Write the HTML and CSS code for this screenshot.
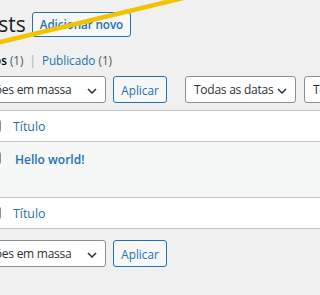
FILE: index.html
```html
<html>
<head>
  <title>Posts</title>
  <link rel="stylesheet" href="styles.css">
</head>
<body>
  <div class="wrap">
    <div class="heading">
      <h1>Posts</h1>
      <a class="title-action" href="#">Adicionar novo</a>
    </div>

    <ul class="subsubsub">
      <li><a class="current" href="#">Todos <span class="count">(1)</span></a><span class="sep">|</span></li>
      <li><a href="#">Publicado <span class="count">(1)</span></a></li>
    </ul>

    <div class="tablenav">
      <div class="select bulk">Ações em massa
        <svg class="chev" viewBox="0 0 10 6"><polyline points="1,1 5,5 9,1"/></svg>
      </div>
      <button class="button">Aplicar</button>
      <div class="select dates">Todas as datas
        <svg class="chev" viewBox="0 0 10 6"><polyline points="1,1 5,5 9,1"/></svg>
      </div>
      <div class="select cats">Todas as categorias
        <svg class="chev" viewBox="0 0 10 6"><polyline points="1,1 5,5 9,1"/></svg>
      </div>
    </div>

    <table class="posts">
      <thead>
        <tr>
          <td class="check"><span class="cb"></span></td>
          <th class="title"><a href="#">Título</a></th>
        </tr>
      </thead>
      <tbody>
        <tr class="alt">
          <td class="check"><span class="cb"></span></td>
          <td class="title"><a class="row-title" href="#">Hello world!</a></td>
        </tr>
      </tbody>
      <tfoot>
        <tr>
          <td class="check"><span class="cb"></span></td>
          <th class="title"><a href="#">Título</a></th>
        </tr>
      </tfoot>
    </table>

    <div class="tablenav bottom">
      <div class="select bulk">Ações em massa
        <svg class="chev" viewBox="0 0 10 6"><polyline points="1,1 5,5 9,1"/></svg>
      </div>
      <button class="button">Aplicar</button>
    </div>
  </div>

  <svg class="marker" viewBox="0 0 320 60"><line x1="-10" y1="44.5" x2="200" y2="-6" /></svg>
</body>
</html>
```

FILE: styles.css
```css
html, body {
  overflow: hidden;
}

body {
  margin: 0;
  background-color: #f0f0f1;
  font-family: "Open Sans", "Noto Sans", sans-serif;
  color: #1d2327;
  font-size: 12px;
}

a {
  color: #2271b1;
  text-decoration: none;
}

.wrap {
  margin-left: -27px;
  width: 520px;
}

.heading {
  display: flex;
  align-items: center;
  padding-top: 12px;
}

h1 {
  font-size: 21px;
  font-weight: 400;
  margin: 0;
  line-height: 25px;
}

.title-action {
  margin-left: 6px;
  height: 23px;
  line-height: 23px;
  padding: 0 7px;
  border: 1px solid #2271b1;
  border-radius: 3px;
  background-color: #f6f7f7;
  font-size: 11.7px;
  font-weight: 600;
  letter-spacing: -0.1px;
}

.subsubsub {
  list-style: none;
  margin: 15px 0 0;
  padding: 0;
  display: flex;
  font-size: 11.7px;
  line-height: 16px;
  color: #646970;
}

.subsubsub .current {
  color: #000;
  font-weight: 600;
}

.count {
  color: #50575e;
  font-weight: 400;
}

.sep {
  margin: 0 6px;
  color: #a7aaad;
}

.tablenav {
  display: flex;
  margin-top: 8px;
  height: 27px;
}

.tablenav.bottom {
  margin-top: 11px;
}

.select {
  box-sizing: border-box;
  height: 27px;
  line-height: 25px;
  border: 1px solid #8c8f94;
  border-radius: 3px;
  background-color: #fff;
  color: #2c3338;
  font-size: 12px;
  letter-spacing: -0.25px;
  padding-left: 8px;
  position: relative;
  white-space: nowrap;
  overflow: hidden;
}

.chev {
  position: absolute;
  right: 8px;
  top: 11px;
  width: 10px;
  height: 6px;
  fill: none;
  stroke: #2c3338;
  stroke-width: 1.5;
}

.bulk {
  width: 133px;
}

.dates {
  width: 111px;
  margin-left: 18px;
}

.cats {
  width: 150px;
  margin-left: 8px;
}

.button {
  box-sizing: border-box;
  margin-left: 7px;
  width: 54px;
  height: 27px;
  border: 1px solid #2271b1;
  border-radius: 3px;
  background-color: #f6f7f7;
  color: #2271b1;
  font-family: inherit;
  font-size: 11.7px;
  padding: 0;
}

.posts {
  margin-top: 7px;
  width: 520px;
  border-collapse: collapse;
  border: 1px solid #c3c4c7;
  background-color: #fff;
  font-size: 12.4px;
}

.posts td, .posts th {
  padding: 0;
  text-align: left;
  font-weight: 400;
}

.posts thead th, .posts thead td {
  height: 31px;
  border-bottom: 1px solid #c3c4c7;
}

.posts tfoot th, .posts tfoot td {
  height: 31px;
  border-top: 1px solid #c3c4c7;
}

.check {
  width: 30px;
}

.title {
  padding-left: 9px !important;
}

.cb {
  display: block;
  box-sizing: border-box;
  width: 14px;
  height: 14px;
  margin-left: 13px;
  border: 1px solid #8c8f94;
  border-radius: 3px;
  background-color: #fff;
}

.alt td {
  height: 56px;
  vertical-align: top;
  background-color: #f6f7f7;
}

.alt .check .cb {
  margin-top: 9px;
}

.row-title {
  display: inline-block;
  margin: 9px 0 0 2px;
  font-weight: 600;
  font-size: 12px;
}

.marker {
  position: absolute;
  left: 0;
  top: 0;
  width: 320px;
  height: 60px;
  overflow: visible;
}

.marker line {
  stroke: #f2c300;
  stroke-width: 4.5;
}
```
